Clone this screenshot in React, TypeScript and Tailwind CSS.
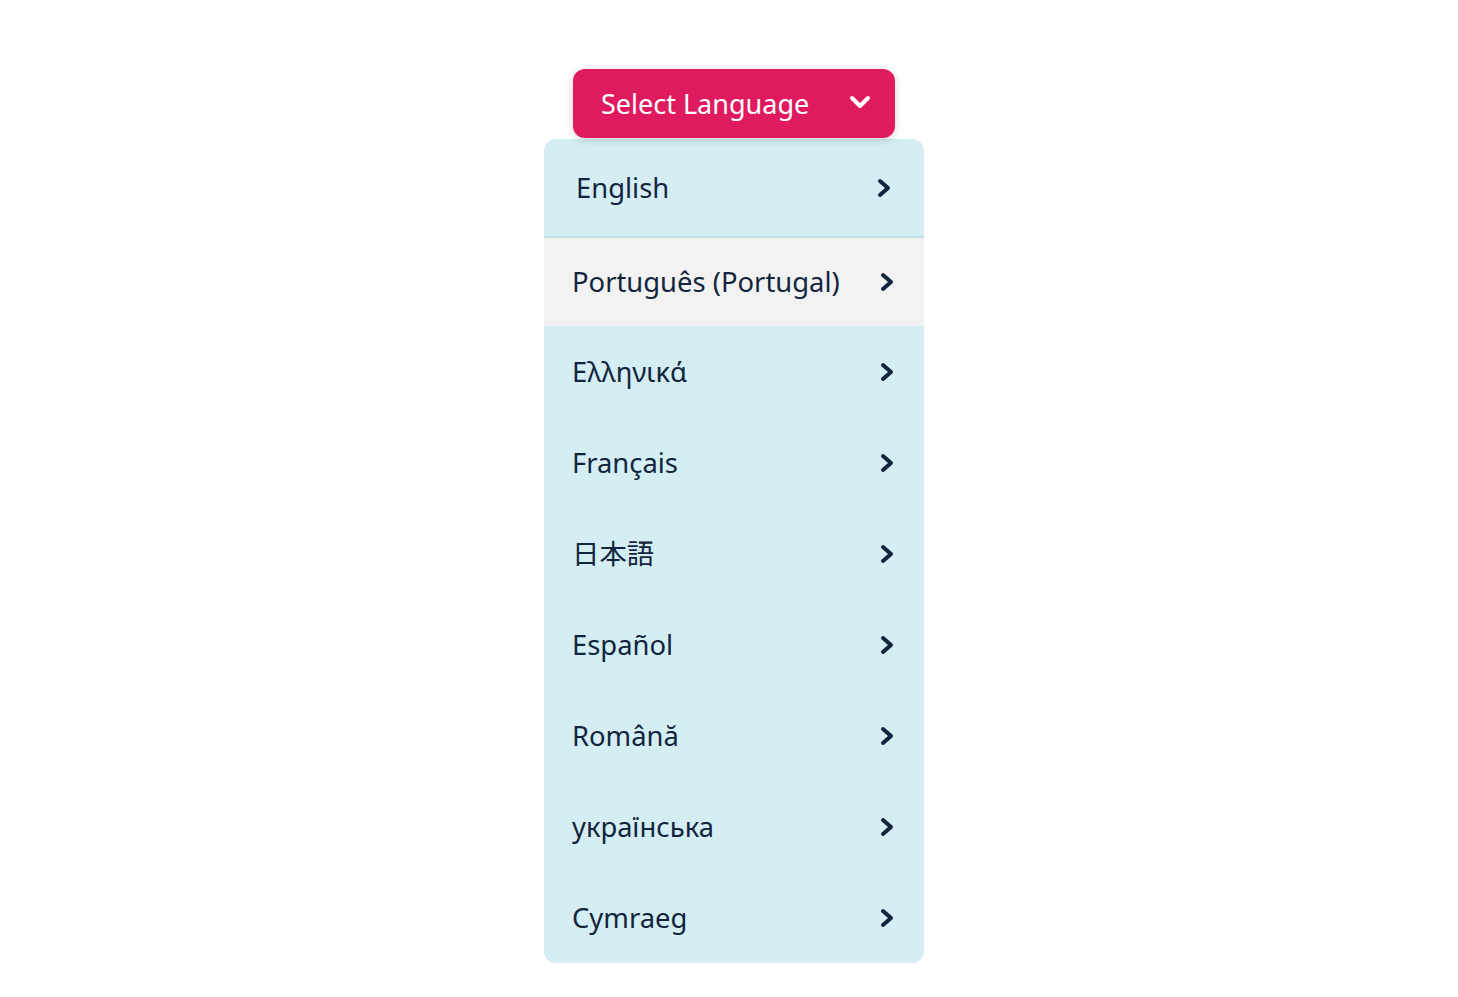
const languages = [
  "Ελληνικά",
  "Français",
  "日本語",
  "Español",
  "Română",
  "українська",
  "Cymraeg",
]

const font = { fontFamily: '"Noto Sans", "Noto Sans CJK JP", sans-serif' }

function ChevronRight() {
  return (
    <svg width="16" height="20" viewBox="0 0 16 20" fill="none" stroke="currentColor" strokeWidth="4" strokeLinecap="round" strokeLinejoin="round">
      <path d="M4 3l8 7-8 7" />
    </svg>
  )
}

function ChevronDown() {
  return (
    <svg width="22" height="14" viewBox="0 0 22 14" fill="none" stroke="currentColor" strokeWidth="4" strokeLinecap="round" strokeLinejoin="round">
      <path d="M3 3l8 8 8-8" />
    </svg>
  )
}

export default function App() {
  return (
    <main className="min-h-screen bg-white flex flex-col items-center pt-[69px] pl-[10px]" style={font}>
      <button className="w-[322px] h-[69px] rounded-xl bg-[#e01a5f] text-white flex items-center justify-between pl-7 pr-6 shadow-[0_2px_8px_rgba(0,0,0,0.18)] relative z-10">
        <span className="text-[27px] leading-none">Select Language</span>
        <span className="-mt-1"><ChevronDown /></span>
      </button>
      <div className="w-[380px] mt-px rounded-xl bg-[#d5eef3] overflow-hidden text-[#13253e]">
        <div className="h-[99px] flex items-center justify-between pl-8 pr-8 border-b-2 border-[#c2e1e7]">
          <span className="text-[27.4px] leading-none">English</span>
          <ChevronRight />
        </div>
        <div className="h-[88px] flex items-center justify-between pl-7 pr-[29px] bg-[#f2f2f2]">
          <span className="text-[27.4px] leading-none">Português (Portugal)</span>
          <ChevronRight />
        </div>
        {languages.map((lang) => (
          <div key={lang} className="h-[91px] flex items-center justify-between pl-7 pr-[29px]">
            <span className="text-[27.4px] leading-none">{lang}</span>
            <ChevronRight />
          </div>
        ))}
      </div>
    </main>
  )
}
